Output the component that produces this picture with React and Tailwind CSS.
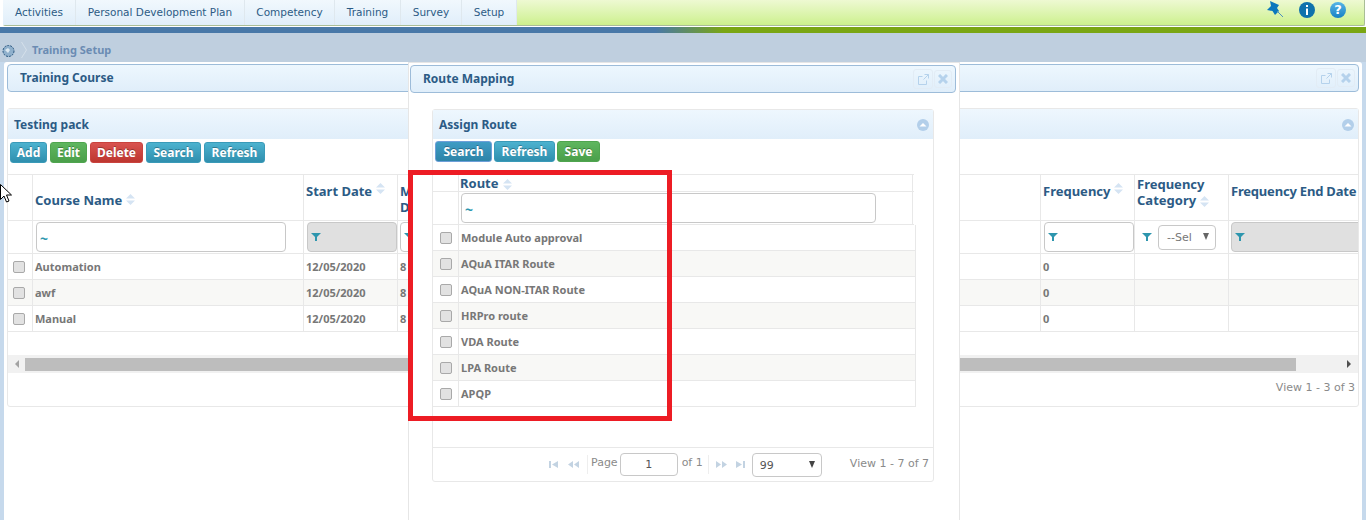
import React from "react";

const font = "font-['DejaVu_Sans',sans-serif]";
const bold = "font-bold font-['Noto_Sans',sans-serif]";

const navTabs = [
  { label: "Activities", width: "w-[73px]" },
  { label: "Personal Development Plan", width: "w-[169px]" },
  { label: "Competency", width: "w-[90px]" },
  { label: "Training", width: "w-[66px]" },
  { label: "Survey", width: "w-[61px]" },
  { label: "Setup", width: "w-[55px]" },
];

const courses = ["Automation", "awf", "Manual"];
const routes = [
  "Module Auto approval",
  "AQuA ITAR Route",
  "AQuA NON-ITAR Route",
  "HRPro route",
  "VDA Route",
  "LPA Route",
  "APQP",
];

const SortIcon = () => (
  <svg width="9" height="11" viewBox="0 0 9 11" className="inline-block ml-1 shrink-0">
    <path d="M4.5 0 9 4.5H0z M0 6.5h9L4.5 11z" fill="#d5e4f3" />
  </svg>
);

const FilterIcon = ({ className = "" }) => (
  <svg width="10" height="8" viewBox="0 0 10 8" className={className}>
    <path d="M0 0h10L6 4v4H4V4z" fill="#2e96ae" />
  </svg>
);

const Checkbox = () => (
  <span className="block w-3 h-3 rounded-[2px] border border-[#a9a9a9] bg-[#e2e2e2]" />
);

const Button = ({ children, color = "blue", width }) => {
  const colors = {
    blue: "from-[#4cb2cf] to-[#2f8fae] border-[#3a9ab8]",
    green: "from-[#5fb65f] to-[#4a9f4a] border-[#4fa54f]",
    red: "from-[#d9534f] to-[#bd362f] border-[#c9433e]",
    active: "from-[#3f9cc4] to-[#2e84a8] border-[#6d9fd8]",
  };
  return (
    <span
      className={`${width} ${colors[color]} ${bold} h-[21px] flex items-center justify-center rounded-[3px] border bg-gradient-to-b text-white text-[12px] [text-shadow:0_-1px_0_rgba(0,0,0,0.3)]`}
    >
      {children}
    </span>
  );
};

const WindowControls = () => (
  <div className="flex gap-[1px] items-center">
    <span className="w-[20px] h-[20px] rounded-[3px] border border-[#e2ecf5] flex items-center justify-center">
      <svg width="11" height="11" viewBox="0 0 11 11" fill="none" stroke="#b5d2ec" strokeWidth="1">
        <path d="M8.5 6.5v4h-8v-8h4M6.5.5h4v4M10.5.5l-5 5" />
      </svg>
    </span>
    <span className="w-[18px] h-[18px] rounded-[3px] border border-[#e2ecf5] flex items-center justify-center">
      <svg width="10" height="10" viewBox="0 0 10 10" stroke="#b5d2ec" strokeWidth="3">
        <path d="M1 1l8 8M9 1l-8 8" />
      </svg>
    </span>
  </div>
);

const CollapseIcon = () => (
  <svg width="12" height="12" viewBox="0 0 12 12">
    <circle cx="6" cy="6" r="6" fill="#b3cfea" />
    <path d="M2.5 7.5 6 4l3.5 3.5z" fill="#fff" />
  </svg>
);

const WindowTitle = ({ title, className }) => (
  <div
    className={`${className} ${bold} h-[28px] flex items-center justify-between pl-[12px] pr-[3px] rounded-[4px] border border-[#9dbcd9] bg-gradient-to-b from-[#edf7fe] to-[#e0eefa] text-[#2c5b85] text-[12px]`}
  >
    <span>{title}</span>
    <WindowControls />
  </div>
);

const PanelTitle = ({ title, className = "" }) => (
  <div
    className={`${className} ${bold} flex items-center justify-between bg-gradient-to-b from-[#eef7fe] to-[#e0eefa] text-[#2c5b85] text-[12px]`}
  >
    <span>{title}</span>
    <CollapseIcon />
  </div>
);

const HeadCell = ({ children, width, className = "" }) => (
  <div
    className={`${width} ${className} ${bold} shrink-0 h-full border-r border-[#e8e8e8] px-[2px] flex text-[13px] leading-4 text-[#2c5b85]`}
  >
    {children}
  </div>
);

const FilterBox = ({ disabled, className = "w-full" }) => (
  <div
    className={`${className} h-[30px] shrink-0 rounded-[4px] border border-[#c8c8c8] flex items-start pl-[3px] pt-[10px] ${disabled ? "bg-[#e0e0e0]" : "bg-white"}`}
  >
    <FilterIcon />
  </div>
);

const BodyCell = ({ children, width, className = "" }) => (
  <div className={`${width} shrink-0 h-full border-r border-[#e8e8e8] px-[2px] flex items-center ${className}`}>
    {children}
  </div>
);

const CourseTable = () => (
  <div className="mt-[11px] overflow-hidden">
    <div className="flex h-[47px] border-y border-[#e8e8e8]">
      <HeadCell width="w-[25px]" />
      <HeadCell width="w-[271px]" className="items-center pt-[4px]">
        Course Name
        <SortIcon />
      </HeadCell>
      <HeadCell width="w-[94px]" className="items-start pt-[8px]">
        Start Date
        <SortIcon />
      </HeadCell>
      <HeadCell width="w-[643px]" className="items-start pt-[8px]">
        Mi
        <br />
        Da
      </HeadCell>
      <HeadCell width="w-[94px]" className="items-start pt-[8px]">
        Frequency
        <SortIcon />
      </HeadCell>
      <HeadCell width="w-[94px]" className="items-start pt-[1px]">
        <span>
          Frequency
          <br />
          Category
          <SortIcon />
        </span>
      </HeadCell>
      <HeadCell width="w-[132px]" className="items-start pt-[8px] whitespace-nowrap tracking-[-0.2px]">
        Frequency End Date
      </HeadCell>
    </div>
    <div className="flex h-[33px] border-b border-[#e8e8e8]">
      <BodyCell width="w-[25px]" />
      <BodyCell width="w-[271px]">
        <div className={`${bold} ml-[1px] h-[30px] w-[250px] rounded-[4px] border border-[#c8c8c8] bg-white pl-[3px] text-[#2e96ae] text-[14px] leading-[32px]`}>
          ~
        </div>
      </BodyCell>
      <BodyCell width="w-[94px]" className="pl-[3px] pr-0">
        <FilterBox disabled />
      </BodyCell>
      <BodyCell width="w-[643px]">
        <FilterBox className="w-[90px]" />
      </BodyCell>
      <BodyCell width="w-[94px]" className="pl-[3px] pr-0">
        <FilterBox />
      </BodyCell>
      <BodyCell width="w-[94px]">
        <FilterIcon className="ml-[5px] mr-[6px] shrink-0" />
        <div className="relative h-[25px] w-[58px] shrink-0 rounded-[4px] border border-[#c8c8c8] pl-[8px] text-[11px] leading-[24px] text-[#777] font-normal overflow-hidden">
          --Sel
          <span className="absolute right-[6px] top-[7px] w-0 h-0 border-x-[3.5px] border-x-transparent border-t-[7px] border-t-[#666]" />
        </div>
      </BodyCell>
      <BodyCell width="w-[132px]">
        <FilterBox disabled className="w-[140px]" />
      </BodyCell>
    </div>
    {courses.map((name, i) => (
      <div
        key={name}
        className={`${bold} flex h-[26px] border-b border-[#e8e8e8] text-[11px] text-[#777] ${i === 1 ? "bg-[#f8f8f6]" : "bg-white"}`}
      >
        <BodyCell width="w-[25px]">
          <span className="ml-[3px]">
            <Checkbox />
          </span>
        </BodyCell>
        <BodyCell width="w-[271px]" className="pt-[1px]">{name}</BodyCell>
        <BodyCell width="w-[94px]" className="pt-[1px]">12/05/2020</BodyCell>
        <BodyCell width="w-[643px]" className="pt-[1px]">8</BodyCell>
        <BodyCell width="w-[94px]" className="pt-[1px]">0</BodyCell>
        <BodyCell width="w-[94px]" />
        <BodyCell width="w-[132px]" />
      </div>
    ))}
  </div>
);

const ScrollBar = () => (
  <div className="mt-[23px] h-[18px] bg-[#f1f1f1] flex items-center">
    <span className="w-[17px] flex justify-center">
      <span className="w-0 h-0 border-y-[4px] border-y-transparent border-r-[4px] border-r-[#a3a3a3]" />
    </span>
    <div className="h-[13px] w-[1271px] bg-[#bdbdbd]" />
    <span className="ml-auto w-[18px] flex justify-center">
      <span className="w-0 h-0 border-y-[4px] border-y-transparent border-l-[4px] border-l-[#505050]" />
    </span>
  </div>
);

const Pager = () => (
  <>
    <div className="ml-[116px] flex items-center gap-[10px] w-[34px]">
      <svg width="9" height="7" viewBox="0 0 9 7" fill="#c3d3e2" className="shrink-0">
        <path d="M0 0h2v7H0zM9 0v7L3 3.5z" />
      </svg>
      <svg width="11" height="7" viewBox="0 0 11 7" fill="#c3d3e2" className="shrink-0">
        <path d="M5 0v7L0 3.5zM11 0v7L6 3.5z" />
      </svg>
    </div>
    <span className="ml-[4px] border-l border-[#eee] pl-[3px] pb-[2px]">Page</span>
    <div className="ml-[2px] w-[58px] h-[23px] rounded-[4px] border border-[#c8c8c8] text-center leading-[22px] text-[#555]">
      1
    </div>
    <span className="ml-[4px] border-r border-[#eee] pr-[5px] pb-[2px]">of 1</span>
    <div className="ml-[7px] flex items-center gap-[9px] w-[29px]">
      <svg width="11" height="7" viewBox="0 0 11 7" fill="#c3d3e2" className="shrink-0">
        <path d="M0 0v7l5-3.5zM6 0v7l5-3.5z" />
      </svg>
      <svg width="9" height="7" viewBox="0 0 9 7" fill="#c3d3e2" className="shrink-0">
        <path d="M0 0v7l6-3.5zM7 0h2v7H7z" />
      </svg>
    </div>
    <div className="relative ml-[7px] w-[70px] h-[24px] rounded-[4px] border border-[#c8c8c8] pl-[7px] leading-[24px] text-[#555]">
      99
      <span className="absolute right-[6px] top-[7px] w-0 h-0 border-x-[3.5px] border-x-transparent border-t-[7px] border-t-[#444]" />
    </div>
    <span className="ml-auto mr-[4px] pb-[1px]">View 1 - 7 of 7</span>
  </>
);

const RouteMapping = () => (
  <div className="absolute left-[408px] top-[62px] w-[552px] h-[458px] bg-white border-x border-t border-[#e6e6e6] pt-[2px] px-[1px]">
    <WindowTitle title="Route Mapping" className="w-[546px]" />
    <div className="ml-[22px] mt-[16px] w-[502px] h-[373px] rounded-[3px] border border-[#e8e8e8] flex flex-col">
      <PanelTitle title="Assign Route" className="h-[29px] pl-[6px] pr-[4px]" />
      <div className="flex gap-[2px] pl-[2px] pt-[2px]">
        <Button color="active" width="w-[57px]">Search</Button>
        <Button width="w-[61px]">Refresh</Button>
        <Button color="green" width="w-[43px]">Save</Button>
      </div>
      <div className="mt-[12px] w-[481px] flex h-[18px] border-y border-[#e8e8e8]">
        <div className="w-[26px] border-r border-[#e8e8e8]" />
        <div className={`${bold} w-[454px] border-r border-[#e8e8e8] pl-[1px] pt-[2px] flex items-center text-[13px] text-[#2c5b85]`}>
          Route
          <SortIcon />
        </div>
      </div>
      <div className="w-[481px] flex h-[33px] border-b border-[#e8e8e8]">
        <div className="w-[26px] border-r border-[#e8e8e8]" />
        <div className="w-[454px] border-r border-[#e8e8e8] pl-[2px] pt-[1px]">
          <div className={`${bold} h-[30px] w-[415px] rounded-[4px] border border-[#c8c8c8] pl-[3px] text-[#2e96ae] text-[14px] leading-[32px]`}>
            ~
          </div>
        </div>
      </div>
      {routes.map((route, i) => (
        <div
          key={route}
          className={`${bold} w-[483px] flex h-[26px] border-b border-r border-[#e8e8e8] text-[11px] text-[#777] ${i % 2 === 1 ? "bg-[#f8f8f6]" : "bg-white"}`}
        >
          <div className="w-[26px] border-r border-[#e8e8e8] flex items-center justify-center">
            <Checkbox />
          </div>
          <div className="pl-[2px] pt-[1px] flex items-center">{route}</div>
        </div>
      ))}
      <div className="mt-auto h-[34px] border-t border-[#e8e8e8] flex items-center text-[11px] text-[#8a8a8a]">
        <Pager />
      </div>
    </div>
  </div>
);

const NavIcons = () => (
  <div className="flex items-center gap-[15px] pr-[18px] pb-[6px]">
    <svg width="17" height="17" viewBox="0 0 17 17">
      <path d="M3 0l9 4-2 3 2 3-4 4-2.500-4L0 9l4-4z" fill="#0b78bd" />
      <path d="M10 10l6 6" stroke="#4d90bd" strokeWidth="1" />
    </svg>
    <svg width="16" height="16" viewBox="0 0 16 16">
      <circle cx="8" cy="8" r="8" fill="#0f72ac" />
      <path d="M7 3h2v2H7zM7 6.500h2V13H7z" fill="#fff" />
    </svg>
    <span className="w-[16px] h-[16px] rounded-full bg-gradient-to-b from-[#55b5e6] to-[#1281c4] flex items-center justify-center text-white font-bold text-[13px] leading-none">
      ?
    </span>
  </div>
);

const Cursor = () => (
  <svg width="13" height="20" viewBox="0 0 13 20" className="absolute left-0 top-[184px]">
    <path d="M.5.5v15l3.500-3.500 2.500 6 2.500-1-2.500-6h5z" fill="#fff" stroke="#000" />
  </svg>
);

export default function App() {
  return (
    <div className={`${font} relative w-[1366px] h-[520px] overflow-hidden bg-[#c6d9ec]`}>
      {/* Top menu */}
      <div className="h-[27px] bg-white pl-[3px] pr-[1px]">
        <div className="flex h-[26px] rounded-b-[2px] border-b border-r border-[#a9bd97] bg-gradient-to-b from-[#eef9d2] to-[#cdf08d] justify-between">
          <div className="flex">
            {navTabs.map((tab) => (
              <div
                key={tab.label}
                className={`${tab.width} h-full flex items-center justify-center border-r border-[#dfe8ee] bg-gradient-to-b from-[#f1f8fd] to-[#e0eefa] text-[#2c5b85] text-[10.5px]`}
              >
                {tab.label}
              </div>
            ))}
          </div>
          <NavIcons />
        </div>
      </div>
      <div className="h-[6px] bg-[linear-gradient(to_right,#4878a8_0%,#4878a8_48%,#7aa613_53%,#7aa613_100%)]" />

      {/* Breadcrumb */}
      <div className="h-[29px] bg-[#bfcfdf] flex items-center pl-[1px] pt-[5px]">
        <svg width="15" height="15" viewBox="0 0 15 15">
          <circle cx="7.500" cy="8" r="5.500" fill="#8fb0cc" stroke="#27557e" strokeDasharray="2 1" />
          <path d="M4 7l3-2 2 2-2 3z" fill="#dce8f0" />
        </svg>
        <svg width="6" height="16" viewBox="0 0 6 16" fill="none" stroke="#d5e0ea" className="ml-[5px]">
          <path d="M.5 0l5 8-5 8" />
        </svg>
        <span className={`${bold} ml-[5px] text-[11px] text-[#6b8cb3]`}>Training Setup</span>
      </div>

      {/* Main window */}
      <div className="ml-[4px] w-[1358px] h-[458px] bg-white rounded-t-[3px] pt-[2px] px-[3px]">
        <WindowTitle title="Training Course" className="w-[1352px]" />
        <div className="mt-[16px] w-[1352px] h-[299px] border border-[#e8e8e8] rounded-[3px]">
          <PanelTitle title="Testing pack" className="h-[30px] pl-[6px] pr-[4px] pt-[1px]" />
          <div className="flex gap-[3px] pl-[2px] pt-[3px]">
            <Button width="w-[37px]">Add</Button>
            <Button color="green" width="w-[37px]">Edit</Button>
            <Button color="red" width="w-[53px]">Delete</Button>
            <Button width="w-[55px]">Search</Button>
            <Button width="w-[61px]">Refresh</Button>
          </div>
          <CourseTable />
          <ScrollBar />
          <div className="h-[31px] flex items-center justify-end pr-[3px] text-[11px] text-[#8a8a8a]">
            View 1 - 3 of 3
          </div>
        </div>
      </div>

      <RouteMapping />

      {/* Red highlight around the route list */}
      <div className="absolute left-[408px] top-[170px] w-[264px] h-[251px] border-[5px] border-[#ed1c24]" />

      <Cursor />
    </div>
  );
}
